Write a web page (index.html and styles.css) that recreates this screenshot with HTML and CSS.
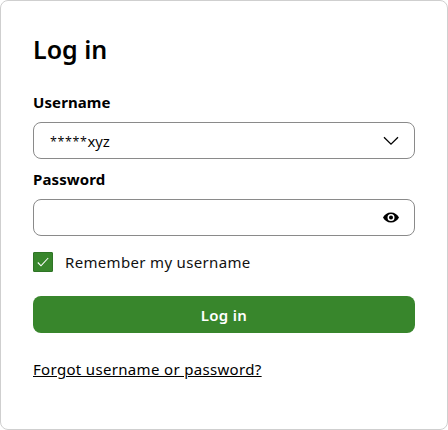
FILE: index.html
```html
<!DOCTYPE html>
<html lang="en">
<head>
<meta charset="utf-8">
<title>Log in</title>
<link rel="stylesheet" href="styles.css">
</head>
<body>
<main class="card">
  <h1 class="title">Log in</h1>
  <label class="label label-user">Username</label>
  <div class="field">
    <span class="value"><span class="stars">*****</span>xyz</span>
    <svg class="chev" width="16" height="10" viewBox="0 0 16 10"><path d="M1 1.2 8 8.200 15 1.200" fill="none" stroke="#000" stroke-width="1.300"/></svg>
  </div>
  <label class="label label-pass">Password</label>
  <div class="field">
    <span class="value"></span>
    <svg class="eye" width="16" height="11" viewBox="0 0 16 11"><path fill-rule="evenodd" fill="#000" d="M8 .5C4.400.5 1.400 2.600 0 5.500c1.400 2.900 4.400 5 8 5s6.600-2.100 8-5C14.600 2.600 11.600.5 8 .5ZM8 9a3.500 3.500 0 1 1 0-7 3.500 3.500 0 0 1 0 7Zm0-5.500a2 2 0 1 0 0 4 2 2 0 0 0 0-4Z"/></svg>
  </div>
  <div class="remember">
    <span class="check"><svg width="14" height="12" viewBox="0 0 14 12"><path d="M1.800 6.500 5 9.800 12.200 2" fill="none" stroke="#fff" stroke-width="1.100"/></svg></span>
    <span class="remember-text">Remember my username</span>
  </div>
  <button class="submit" type="button">Log in</button>
  <a class="forgot" href="#">Forgot username or password?</a>
</main>
</body>
</html>
```
FILE: styles.css
```css
* { box-sizing: border-box; }
html, body { margin: 0; padding: 0; background: #fff; }
body { font-family: "Noto Sans", "Open Sans", sans-serif; color: #000; }
.card {
  width: 448px;
  height: 430px;
  border: 1px solid #cfcfcf;
  border-radius: 8px;
  padding: 30px 32px 0;
  display: flex;
  flex-direction: column;
  align-items: stretch;
}
.title {
  margin: 0;
  height: 36px;
  font-size: 25px;
  line-height: 36px;
  font-weight: 600;
}
.label {
  display: block;
  font-size: 15px;
  letter-spacing: 0.100px;
  line-height: 20px;
  font-weight: 700;
  height: 20px;
}
.label-user { margin-top: 25px; margin-bottom: 10px; }
.label-pass { margin-top: 10px; margin-bottom: 10px; }
.field {
  height: 37px;
  border: 1px solid #8a8a8a;
  border-radius: 8px;
  padding: 0 15px 0 16px;
  display: flex;
  align-items: center;
  justify-content: space-between;
}
.value {
  font-family: "Open Sans", sans-serif;
  font-size: 15px;
}
.stars { font-size: 12.500px; vertical-align: 1px; letter-spacing: 0.600px; }
.remember {
  display: flex;
  align-items: center;
  gap: 12px;
  margin-top: 16px;
  height: 20px;
}
.check {
  width: 20px;
  height: 20px;
  background: #38862c;
  border: 1px solid #2f7526;
  border-radius: 1px;
  display: flex;
  align-items: center;
  justify-content: center;
}
.remember-text { font-size: 15px; letter-spacing: 0.330px; line-height: 20px; color: #111; }
.submit {
  margin-top: 24px;
  height: 37px;
  border: 0;
  border-radius: 8px;
  background: #38862c;
  color: #fff;
  font-family: inherit;
  font-size: 15px;
  letter-spacing: 0.300px;
  font-weight: 600;
  padding: 0;
}
.forgot {
  margin-top: 26px;
  font-size: 15px;
  letter-spacing: 0.330px;
  line-height: 20px;
  color: #000;
  text-decoration: underline;
  align-self: flex-start;
}
```
